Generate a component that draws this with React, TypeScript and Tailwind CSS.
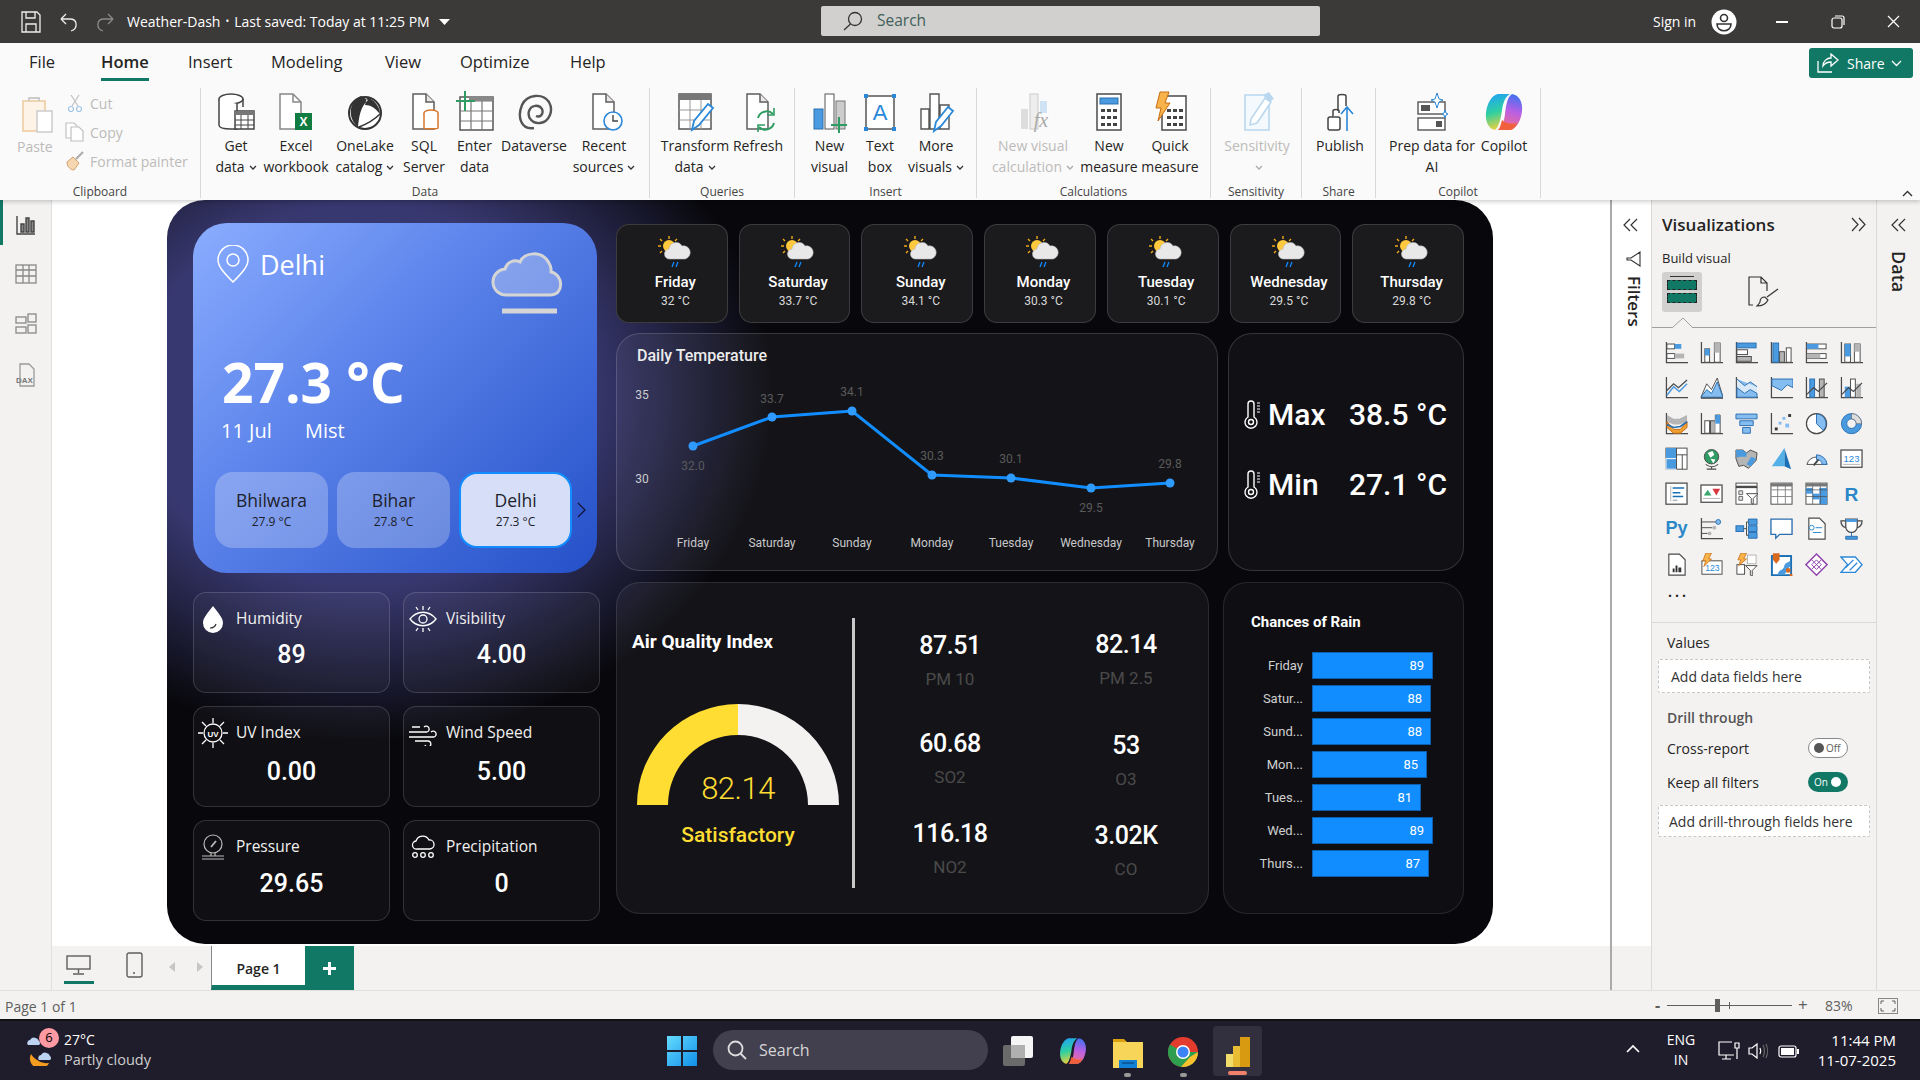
import type { ReactNode } from "react";

const ui = "font-['Open_Sans','Noto_Sans',sans-serif]";
const din = "font-['Roboto',sans-serif]";

const D = "#4a4a4a";
const B = "#4a9ae0";
const L = "#86bdf0";
const G = "#b5b5b5";

const Doc = ({ s = "#605e5c" }: { s?: string }) => (
  <>
    <path d="M9 3h13l8 8v27H9z" fill="#fff" stroke={s} strokeWidth="1.5" />
    <path d="M22 3v8h8" fill="#e8e8e8" stroke={s} strokeWidth="1.5" />
  </>
);

const ribbonIcons: Record<string, ReactNode> = {
  paste: (
    <>
      <rect x="5" y="7" width="22" height="30" fill="#fdf3e6" stroke="#f0d5b0" strokeWidth="2" />
      <path d="M11 7V4h10v3" fill="none" stroke="#ccc" strokeWidth="2" />
      <rect x="19" y="17" width="15" height="21" fill="#fff" stroke="#ccc" strokeWidth="1.5" />
    </>
  ),
  get: (
    <>
      <ellipse cx="15" cy="8" rx="12" ry="5" fill="#fff" stroke="#444" strokeWidth="1.5" />
      <path d="M3 8v26c0 3 5 4 12 4h6V13M27 8v8" fill="#fff" stroke="#444" strokeWidth="1.5" />
      <rect x="19" y="20" width="19" height="18" fill="#fff" stroke="#444" strokeWidth="1.5" />
      <path d="M19 24h19v-4H19z" fill="#777" />
      <path d="M25 24v14M32 24v14M19 29h19M19 34h19" stroke="#444" />
    </>
  ),
  excel: (
    <>
      <path d="M4 3h13l8 8v27H4z" fill="#fff" stroke="#888" strokeWidth="1.5" />
      <path d="M17 3v8h8" fill="none" stroke="#888" strokeWidth="1.5" />
      <rect x="19" y="22" width="17" height="17" fill="#107c41" />
      <text x="27.5" y="35" fontSize="12" fontWeight="700" fill="#fff" textAnchor="middle" fontFamily="Liberation Sans">X</text>
    </>
  ),
  lake: (
    <>
      <circle cx="20" cy="22" r="16" fill="#fff" stroke="#333" strokeWidth="2" />
      <path d="M16 5c-12 5-14 22-3 31 1-9 2-20 10-27zM22 6c7 3 13 9 13 17-5-6-9-9-15-9z" fill="#333" />
      <path d="M14 36c8-3 15-7 21-13" fill="none" stroke="#333" strokeWidth="1.5" />
    </>
  ),
  sql: (
    <>
      <Doc />
      <ellipse cx="27" cy="22" rx="7" ry="3" fill="#fff" stroke="#d9772b" strokeWidth="1.5" />
      <path d="M20 22v15c0 1 14 1 14 0V22" fill="#fff" stroke="#d9772b" strokeWidth="1.5" />
    </>
  ),
  enter: (
    <>
      <rect x="5" y="6" width="33" height="33" fill="#fff" stroke="#555" strokeWidth="1.5" />
      <path d="M5 10h33M16 10v29M27 10v29M5 20h33M5 30h33" stroke="#777" strokeWidth="1.2" />
      <rect x="14" y="5" width="24" height="5" fill="#888" />
      <path d="M10 0v20M1 10h19" stroke="#2f9c63" strokeWidth="2" />
    </>
  ),
  dataverse: (
    <>
      <path d="M20 37C7 39 3 26 8 14 13 3 29 2 35 11c5 9 0 20-9 21-7 1-13-5-11-12 2-6 10-7 13-2 2 5-2 9-6 7" fill="none" stroke="#555" strokeWidth="2.4" />
    </>
  ),
  recent: (
    <>
      <Doc />
      <circle cx="29" cy="30" r="9" fill="#fff" stroke="#2b88d8" strokeWidth="1.6" />
      <path d="M29 24v6h5" fill="none" stroke="#444" strokeWidth="1.4" />
    </>
  ),
  transform: (
    <>
      <rect x="4" y="3" width="32" height="35" fill="#fff" stroke="#555" strokeWidth="1.5" />
      <rect x="4" y="3" width="32" height="6" fill="#777" />
      <path d="M15 9v29M26 9v29M4 19h32M4 29h32" stroke="#999" />
      <path d="M17 39l2-9 14-17 5 4-14 17z" fill="#fff" stroke="#2b88d8" strokeWidth="1.8" />
    </>
  ),
  refresh: (
    <>
      <Doc />
      <path d="M20 27a9 9 0 0 1 15-4M36 32a9 9 0 0 1-15 4" fill="none" stroke="#2f9c63" strokeWidth="2" />
      <path d="M36 17v7h-7M20 41v-7h7" fill="none" stroke="#2f9c63" strokeWidth="1.6" />
    </>
  ),
  newvisual: (
    <>
      <rect x="4" y="18" width="9" height="20" fill={B} stroke="#2b6fb0" />
      <rect x="15" y="3" width="9" height="35" fill="#fff" stroke="#555" />
      <rect x="26" y="10" width="9" height="28" fill="#ccc" stroke="#777" />
      <path d="M29 26v16M21 34h16" stroke="#2f9c63" strokeWidth="2" />
    </>
  ),
  textbox: (
    <>
      <rect x="6" y="5" width="28" height="33" fill="#fff" stroke="#555" strokeWidth="1.5" />
      <path d="M4 3h4v4H4zM32 3h4v4h-4zM4 36h4v4H4zM32 36h4v4h-4z" fill="#2b88d8" />
      <text x="20" y="29" fontSize="22" fill="#2b88d8" textAnchor="middle" fontFamily="Liberation Sans">A</text>
    </>
  ),
  more: (
    <>
      <path d="M5 18h8v20H5zM14 3h9v35h-9zM24 14h9v24h-9z" fill="#fff" stroke="#555" strokeWidth="1.4" />
      <path d="M18 40l2-9 12-15 5 4-12 15z" fill="#fff" stroke="#2b88d8" strokeWidth="1.8" />
    </>
  ),
  calc: (
    <>
      <rect x="8" y="18" width="7" height="20" fill="#ddd" />
      <rect x="17" y="3" width="8" height="35" fill="#eee" stroke="#ccc" />
      <rect x="27" y="10" width="7" height="12" fill="#cfe3f5" />
      <text x="28" y="36" fontSize="20" fontStyle="italic" fill="#aaa" textAnchor="middle" fontFamily="Liberation Serif">fx</text>
    </>
  ),
  measure: (
    <>
      <rect x="8" y="3" width="24" height="36" fill="#fff" stroke="#555" strokeWidth="1.6" />
      <rect x="11" y="7" width="18" height="6" fill={B} stroke="#2b6fb0" />
      <path d="M12 18h4v3h-4zM18 18h4v3h-4zM24 18h4v3h-4zM12 25h4v3h-4zM18 25h4v3h-4zM24 25h4v3h-4zM12 32h4v3h-4zM18 32h4v3h-4zM24 32h4v3h-4z" fill="#444" />
    </>
  ),
  quick: (
    <>
      <rect x="12" y="5" width="24" height="34" fill="#fff" stroke="#555" strokeWidth="1.6" />
      <path d="M17 18h4v3h-4zM23 18h4v3h-4zM29 18h4v3h-4zM17 25h4v3h-4zM23 25h4v3h-4zM29 25h4v3h-4zM17 32h4v3h-4zM23 32h4v3h-4zM29 32h4v3h-4z" fill="#444" />
      <path d="M10 1h9l-4 11h5L8 30l3-13H6z" fill="#f8b44a" stroke="#c66b10" />
    </>
  ),
  sensitivity: (
    <>
      <path d="M8 4h24v35H8z" fill="#f4f9fd" stroke="#b9d8ef" strokeWidth="1.6" />
      <path d="M14 28L28 7l6 4-14 21-7 2z" fill="#fff" stroke="#b9d8ef" strokeWidth="1.6" />
      <path d="M26 4l6-3 5 7-5 3z" fill="#b9d8ef" />
    </>
  ),
  publish: (
    <>
      <rect x="8" y="26" width="12" height="13" rx="2" fill="#fff" stroke="#444" strokeWidth="1.5" />
      <path d="M13 26v-6c0-2 6-2 6 0v2M18 20V5c0-2 8-2 8 0v10" fill="#fff" stroke="#444" strokeWidth="1.5" />
      <path d="M27 40V16M21 23l6-7 6 7" fill="none" stroke="#2b88d8" strokeWidth="1.6" />
    </>
  ),
  prep: (
    <>
      <rect x="6" y="11" width="27" height="12" fill="#fff" stroke="#555" strokeWidth="1.4" />
      <rect x="9" y="14" width="9" height="6" fill="#555" />
      <rect x="6" y="27" width="27" height="12" fill="#fff" stroke="#555" strokeWidth="1.4" />
      <rect x="24" y="30" width="6" height="6" fill="#555" />
      <path d="M25 2l2 6 4 1-4 2-2 6-2-6-4-2 4-1zM33 19l1 3 2 1-2 1-1 3-1-3-2-1 2-1z" fill="#fff" stroke="#2b88d8" />
    </>
  ),
  copilot: <CopilotShape />,
};

function CopilotShape() {
  return (
    <>
      <defs>
        <linearGradient id="cpA" x1="0.3" y1="0" x2="0.5" y2="1">
          <stop offset="0" stopColor="#1fa4f5" />
          <stop offset=".5" stopColor="#2fd0a0" />
          <stop offset="1" stopColor="#f7d038" />
        </linearGradient>
        <linearGradient id="cpB" x1="0.6" y1="0" x2="0.4" y2="1">
          <stop offset="0" stopColor="#3f72f0" />
          <stop offset=".45" stopColor="#b65fe6" />
          <stop offset="1" stopColor="#f7708a" />
        </linearGradient>
      </defs>
      <path d="M14 3h12c-5 3-7 9-8 16-1 8-3 17-7 20-6-1-10-8-9-17C3 12 8 4 14 3z" fill="url(#cpA)" />
      <path d="M28 3c7 1 11 8 10 17-1 10-6 18-12 19H14c5-3 6-9 7-16 1-8 2-17 7-20z" fill="url(#cpB)" />
      <path d="M14 39h13c3-1 5-4 6-7-6 2-12 0-15-3-1 4-2 8-4 10z" fill="#f0603c" />
    </>
  );
}

type RibbonBtn = { w: number; top: string; bottom?: string; icon: string; off?: boolean; caret?: boolean };
type RibbonGroup = { label: string; w: number; btns: RibbonBtn[] };

const groups: RibbonGroup[] = [
  {
    label: "Data",
    w: 449,
    btns: [
      { w: 60, top: "Get", bottom: "data", icon: "get", caret: true },
      { w: 60, top: "Excel", bottom: "workbook", icon: "excel" },
      { w: 78, top: "OneLake", bottom: "catalog", icon: "lake", caret: true },
      { w: 40, top: "SQL", bottom: "Server", icon: "sql" },
      { w: 61, top: "Enter", bottom: "data", icon: "enter" },
      { w: 58, top: "Dataverse", icon: "dataverse" },
      { w: 82, top: "Recent", bottom: "sources", icon: "recent", caret: true },
    ],
  },
  {
    label: "Queries",
    w: 145,
    btns: [
      { w: 80, top: "Transform", bottom: "data", icon: "transform", caret: true },
      { w: 46, top: "Refresh", icon: "refresh" },
    ],
  },
  {
    label: "Insert",
    w: 182,
    btns: [
      { w: 59, top: "New", bottom: "visual", icon: "newvisual" },
      { w: 42, top: "Text", bottom: "box", icon: "textbox" },
      { w: 70, top: "More", bottom: "visuals", icon: "more", caret: true },
    ],
  },
  {
    label: "Calculations",
    w: 234,
    btns: [
      { w: 102, top: "New visual", bottom: "calculation", icon: "calc", off: true, caret: true },
      { w: 50, top: "New", bottom: "measure", icon: "measure" },
      { w: 72, top: "Quick", bottom: "measure", icon: "quick" },
    ],
  },
  { label: "Sensitivity", w: 91, btns: [{ w: 82, top: "Sensitivity", bottom: " ", icon: "sensitivity", off: true, caret: true }] },
  { label: "Share", w: 74, btns: [{ w: 66, top: "Publish", icon: "publish" }] },
  {
    label: "Copilot",
    w: 165,
    btns: [
      { w: 102, top: "Prep data for", bottom: "AI", icon: "prep" },
      { w: 42, top: "Copilot", icon: "copilot" },
    ],
  },
];

const Caret = ({ c = "#333" }: { c?: string }) => (
  <svg width="8" height="6" viewBox="0 0 8 6" className="ml-1 inline-block">
    <path d="M1 1l3 3 3-3" fill="none" stroke={c} strokeWidth="1.3" />
  </svg>
);

const TitleBar = () => (
  <div className={`h-[43px] bg-[#3b3a39] flex items-center text-white shrink-0 ${ui}`}>
    <svg width="20" height="22" viewBox="0 0 20 22" className="ml-[21px]" fill="none" stroke="#eee" strokeWidth="1.3">
      <path d="M1 1h15l3 3v17H1z" />
      <path d="M5 1v6h9V1M5 21v-8h10v8" />
    </svg>
    <svg width="18" height="20" viewBox="0 0 18 20" className="ml-[19px]" fill="none" stroke="#eee" strokeWidth="1.3">
      <path d="M1 7l5 5M1 7l5-5M1 7h9c8 0 8 10 1 12" />
    </svg>
    <svg width="18" height="20" viewBox="0 0 18 20" className="ml-[18px]" fill="none" stroke="#8a8a8a" strokeWidth="1.3">
      <path d="M17 7l-5 5M17 7l-5-5M17 7H8c-8 0-8 10-1 12" />
    </svg>
    <span className="ml-[13px] text-[14px] whitespace-nowrap">Weather-Dash</span>
    <span className="mx-[5px] text-[10px]">•</span>
    <span className="text-[14px] whitespace-nowrap">Last saved: Today at 11:25 PM</span>
    <svg width="11" height="6" viewBox="0 0 11 6" className="ml-[9px]">
      <path d="M0 0h11L5.500 6z" fill="#fff" />
    </svg>
    <div className="absolute left-[821px] top-[6px] w-[499px] h-[30px] bg-[#d2d0ce] rounded-[2px] flex items-center">
      <svg width="20" height="20" viewBox="0 0 20 20" className="ml-[22px]" fill="none" stroke="#333" strokeWidth="1.3">
        <circle cx="12" cy="8" r="6.500" />
        <path d="M7.500 13L1 19" />
      </svg>
      <span className="ml-[14px] text-[15.500px] text-[#3f5f5a]">Search</span>
    </div>
    <span className="absolute left-[1653px] top-[11px] text-[14px]">Sign in</span>
    <svg width="26" height="26" viewBox="0 0 26 26" className="absolute left-[1711px] top-[9px]">
      <circle cx="13" cy="13" r="12.500" fill="#fff" />
      <circle cx="13" cy="9" r="3.500" fill="none" stroke="#333" strokeWidth="1.6" />
      <path d="M6 15h14c0 9-14 9-14 0z" fill="none" stroke="#333" strokeWidth="1.6" />
    </svg>
    <div className="absolute left-[1776px] top-[21px] w-[12px] h-[1.5px] bg-white" />
    <svg width="14" height="14" viewBox="0 0 14 14" className="absolute left-[1831px] top-[15px]" fill="none" stroke="#fff" strokeWidth="1.2">
      <rect x="1" y="3" width="10" height="10" rx="2" />
      <path d="M4 1h7c1 0 2 1 2 2v7" />
    </svg>
    <svg width="13" height="13" viewBox="0 0 13 13" className="absolute left-[1887px] top-[15px]" stroke="#fff" strokeWidth="1.2">
      <path d="M1 1l11 11M12 1L1 12" />
    </svg>
  </div>
);

const Ribbon = () => (
  <div className={`h-[157px] bg-[#fafafa] shrink-0 relative z-10 shadow-[0_2px_4px_rgba(0,0,0,0.18)] ${ui}`}>
    <div className="h-[40px] flex items-center text-[16.500px] text-[#252423] relative">
      <span className="absolute left-[29px] top-[7px]">File</span>
      <span className="absolute left-[101px] top-[7px] font-semibold">Home</span>
      <div className="absolute left-[101px] top-[35px] w-[48px] h-[3px] bg-[#117865]" />
      <span className="absolute left-[188px] top-[7px]">Insert</span>
      <span className="absolute left-[271px] top-[7px]">Modeling</span>
      <span className="absolute left-[385px] top-[7px]">View</span>
      <span className="absolute left-[460px] top-[7px]">Optimize</span>
      <span className="absolute left-[570px] top-[7px]">Help</span>
      <div className="absolute left-[1809px] top-[5px] w-[104px] h-[30px] bg-[#117865] rounded-[3px] flex items-center text-white text-[14px]">
        <svg width="22" height="20" viewBox="0 0 22 20" className="ml-[8px]" fill="none" stroke="#fff" strokeWidth="1.3">
          <path d="M6 13c0-5 4-8 8-8V1l7 6-7 6v-4c-4 0-6 1-8 4zM1 8v11h14" />
        </svg>
        <span className="ml-[8px]">Share</span>
        <svg width="11" height="7" viewBox="0 0 11 7" className="ml-[6px]" fill="none" stroke="#fff" strokeWidth="1.3">
          <path d="M1 1l4.500 4.500L10 1" />
        </svg>
      </div>
    </div>
    <div className="flex h-[110px] mt-[5px]">
      <div className="w-[201px] h-full border-r border-[#d8d8d8] relative shrink-0 text-[14px] text-[#bdbbb9]">
        <svg width="40" height="40" viewBox="0 0 40 40" className="absolute left-[18px] top-[6px]">{ribbonIcons.paste}</svg>
        <span className="absolute left-[17px] top-[48px]">Paste</span>
        <svg width="14" height="18" viewBox="0 0 14 18" className="absolute left-[68px] top-[6px]" fill="none" stroke="#c0c0c0" strokeWidth="1.2">
          <path d="M3 1l7 11M11 1L4 12" />
          <circle cx="3" cy="15" r="2.500" stroke="#9fc5e8" />
          <circle cx="11" cy="15" r="2.500" stroke="#9fc5e8" />
        </svg>
        <span className="absolute left-[90px] top-[5px]">Cut</span>
        <svg width="20" height="20" viewBox="0 0 20 20" className="absolute left-[65px] top-[34px]" fill="#fff" stroke="#c0c0c0" strokeWidth="1.2">
          <path d="M1 1h8l3 3v12H1z" />
          <path d="M6 5h8l4 4v10H6z" />
        </svg>
        <span className="absolute left-[90px] top-[34px]">Copy</span>
        <svg width="20" height="20" viewBox="0 0 20 20" className="absolute left-[65px] top-[63px]">
          <path d="M2 11l6-5 6 6-5 7c-4 0-7-4-7-8z" fill="#f6d7b0" stroke="#d0a070" />
          <path d="M11 8l7-7" stroke="#aaa" strokeWidth="2" />
        </svg>
        <span className="absolute left-[90px] top-[63px] whitespace-nowrap">Format painter</span>
        <span className="absolute left-0 right-0 top-[95px] text-center text-[12px] text-[#444]">Clipboard</span>
      </div>
      {groups.map((g) => (
        <div key={g.label} className="h-full border-r border-[#d8d8d8] relative shrink-0 pl-[5px] flex" style={{ width: g.w }}>
          {g.btns.map((b) => (
            <div key={b.top} className={`flex flex-col items-center shrink-0 pt-[3px] text-[14px] leading-[21px] ${b.off ? "text-[#bdbbb9]" : "text-[#252423]"}`} style={{ width: b.w }}>
              <svg width="40" height="42" viewBox="0 0 40 42" className="shrink-0 mb-[2px]">
                {ribbonIcons[b.icon]}
              </svg>
              <span className="whitespace-nowrap">{b.top}</span>
              <span className="whitespace-nowrap">
                {b.bottom}
                {b.caret && <Caret c={b.off ? "#aaa" : "#333"} />}
              </span>
            </div>
          ))}
          <span className="absolute left-0 right-0 top-[95px] text-center text-[12px] text-[#444]">{g.label}</span>
        </div>
      ))}
      <svg width="11" height="7" viewBox="0 0 11 7" className="absolute left-[1902px] top-[147px]" fill="none" stroke="#333" strokeWidth="1.4">
        <path d="M1 6l4.500-4.500L10 6" />
      </svg>
    </div>
  </div>
);

const LeftNav = () => (
  <div className="w-[52px] shrink-0 bg-[#f3f2f1] border-r border-[#e1dfdd] relative">
    <div className="absolute left-0 top-0 w-[3px] h-[45px] bg-[#117865]" />
    <div className="flex flex-col items-center gap-[28px] pt-[15px]">
      <svg width="20" height="20" viewBox="0 0 20 20" fill="none" stroke="#444" strokeWidth="1.4">
        <path d="M1 1v18h18" />
        <path d="M5 9h3v8H5zM10 3h3v14h-3zM15 6h3v11h-3z" fill="#8a8886" />
      </svg>
      <svg width="22" height="22" viewBox="0 0 22 22" fill="none" stroke="#888" strokeWidth="1.3">
        <rect x="1" y="2" width="20" height="18" />
        <path d="M1 7h20M1 13h20M8 2v18M14 2v18" />
      </svg>
      <svg width="22" height="22" viewBox="0 0 22 22" fill="none" stroke="#888" strokeWidth="1.3">
        <rect x="1" y="4" width="10" height="6" />
        <rect x="1" y="14" width="10" height="6" />
        <rect x="13" y="1" width="8" height="8" />
        <rect x="13" y="12" width="8" height="8" />
      </svg>
      <svg width="22" height="24" viewBox="0 0 22 24">
        <path d="M5 1h9l5 5v17H5z" fill="none" stroke="#999" strokeWidth="1.3" />
        <text x="1" y="20" fontSize="8" fontWeight="700" fill="#777" fontFamily="Liberation Sans">DAX</text>
      </svg>
    </div>
  </div>
);

const WeatherGlyph = () => (
  <svg width="36" height="34" viewBox="0 0 36 34">
    <circle cx="12" cy="11" r="6" fill="#ffc83d" />
    <path d="M12 1v3M3 4l2 2M1 11h3M3 18l2-2M20 4l-2 2" stroke="#f0a818" strokeWidth="1.4" />
    <path d="M13 24a5 5 0 0 1-1-10 7 7 0 0 1 13-3 6.500 6.500 0 0 1 3 13z" fill="#e8e8e8" stroke="#bbb" strokeWidth="0.6" />
    <path d="M17 27l-2 5M21 27l-2 5" stroke="#118dff" strokeWidth="1.3" />
  </svg>
);

const forecast = [
  ["Friday", "32 °C"],
  ["Saturday", "33.7 °C"],
  ["Sunday", "34.1 °C"],
  ["Monday", "30.3 °C"],
  ["Tuesday", "30.1 °C"],
  ["Wednesday", "29.5 °C"],
  ["Thursday", "29.8 °C"],
];

const tempPts = [
  { d: "Friday", x: 76, y: 69, v: "32.0", ly: 89 },
  { d: "Saturday", x: 155, y: 40, v: "33.7", ly: 22 },
  { d: "Sunday", x: 235, y: 34, v: "34.1", ly: 15 },
  { d: "Monday", x: 315, y: 98, v: "30.3", ly: 79 },
  { d: "Tuesday", x: 394, y: 101, v: "30.1", ly: 82 },
  { d: "Wednesday", x: 474, y: 111, v: "29.5", ly: 131 },
  { d: "Thursday", x: 553, y: 106, v: "29.8", ly: 87 },
];

const rain = [
  ["Friday", 89, 121],
  ["Satur...", 88, 119],
  ["Sund...", 88, 119],
  ["Mon...", 85, 115],
  ["Tues...", 81, 109],
  ["Wed...", 89, 121],
  ["Thurs...", 87, 117],
] as const;

const Thermo = () => (
  <svg width="18" height="30" viewBox="0 0 18 28" fill="none" stroke="#fff" strokeWidth="1.4" className="shrink-0">
    <path d="M5 17V4a3 3 0 0 1 6 0v13a6 6 0 1 1-6 0z" />
    <circle cx="8" cy="22" r="2.500" />
    <path d="M14 3h3M14 6h3M14 9h3M14 12h3" strokeWidth="1" />
  </svg>
);

type Stat = { label: string; value: string; icon: ReactNode };

const stroke = { fill: "none", stroke: "#fff", strokeWidth: 1.3 };
const stats: Stat[] = [
  {
    label: "Humidity",
    value: "89",
    icon: (
      <svg width="34" height="30" viewBox="0 0 34 30">
        <path d="M17 2c6 8 10 12 10 17a10 10 0 0 1-20 0c0-5 4-9 10-17z" fill="#fff" />
        <path d="M14 24c3 0 5-1 6-4" fill="none" stroke="#333" strokeWidth="1.2" />
      </svg>
    ),
  },
  {
    label: "Visibility",
    value: "4.00",
    icon: (
      <svg width="30" height="30" viewBox="0 0 30 30" {...stroke}>
        <path d="M2 15c7-9 19-9 26 0-7 9-19 9-26 0z" />
        <circle cx="15" cy="15" r="4" />
        <path d="M15 2v4M8 3l2 3M22 3l-2 3M15 24v4M8 27l2-3M22 27l-2-3" />
      </svg>
    ),
  },
  {
    label: "UV Index",
    value: "0.00",
    icon: (
      <svg width="32" height="32" viewBox="0 0 32 32" {...stroke}>
        <circle cx="16" cy="16" r="9" />
        <path d="M16 1v5M16 26v5M1 16h5M26 16h5M5 5l4 4M27 5l-4 4M5 27l4-4M27 27l-4-4" />
        <text x="16" y="19.500" fontSize="8" fontWeight="700" fill="#fff" stroke="none" textAnchor="middle" fontFamily="Liberation Sans">UV</text>
      </svg>
    ),
  },
  {
    label: "Wind Speed",
    value: "5.00",
    icon: (
      <svg width="30" height="26" viewBox="0 0 30 26" {...stroke}>
        <path d="M1 12h18a3 3 0 1 0-3-5M1 17h25a3 3 0 1 0-3-5M7 21h13a3 3 0 1 1-3 4M4 7h8" />
      </svg>
    ),
  },
  {
    label: "Pressure",
    value: "29.65",
    icon: (
      <svg width="30" height="28" viewBox="0 0 30 28" fill="none" stroke="#bbb" strokeWidth="1.2">
        <circle cx="15" cy="11" r="9" />
        <path d="M13 14l5-6" strokeWidth="1.8" />
        <path d="M4 23h22M4 26h22M13 20v3M17 20v3" />
      </svg>
    ),
  },
  {
    label: "Precipitation",
    value: "0",
    icon: (
      <svg width="26" height="26" viewBox="0 0 26 26" {...stroke}>
        <path d="M7 15a4 4 0 0 1-1-8 7 7 0 0 1 13-1 4.500 4.500 0 0 1 1 9z" />
        <circle cx="5" cy="21" r="2.300" />
        <circle cx="13" cy="21" r="2.300" />
        <circle cx="21" cy="21" r="2.300" />
      </svg>
    ),
  },
];

const Report = () => (
  <div className="w-[1326px] h-[744px] rounded-[38px] pl-[26px] pt-[23px] flex bg-[radial-gradient(ellipse_410px_345px_at_195px_195px,#3a3a72_0%,#383870_55%,#08080c_100%)] bg-[#050506] shrink-0">
    <div className="w-[406px] shrink-0">
      <div className={`w-[404px] h-[350px] rounded-[34px] bg-[linear-gradient(135deg,#8aadff_0%,#5f86ec_38%,#2450c8_100%)] pt-[22px] relative text-white ${ui}`}>
        <div className="flex items-start pl-[24px]">
          <svg width="32" height="38" viewBox="0 0 32 38" fill="none" stroke="#fff" strokeWidth="1.500" className="shrink-0">
            <path d="M16 37C6 27 1 21 1 15a15 15 0 0 1 30 0c0 6-5 12-15 22z" />
            <circle cx="16" cy="15" r="6" />
          </svg>
          <span className="ml-[11px] text-[27px] leading-[40px]">Delhi</span>
          <svg width="76" height="66" viewBox="0 0 76 66" className="ml-auto mr-[30px] mt-[4px] shrink-0">
            <path d="M16 46a13 13 0 0 1-2-26c2-7 9-10 15-7C33 3 51 1 58 14c3 5 2 7 2 9 12 2 14 23-1 23z" fill="#ffffff" fillOpacity="0.28" stroke="#d5d5d5" strokeWidth="3" />
            <path d="M11 62h55" stroke="#d5d5d5" strokeWidth="5" />
          </svg>
        </div>
        <div className="absolute left-[29px] top-[129px] text-[55px] leading-[60px] font-bold whitespace-nowrap">27.3 °C</div>
        <div className="absolute left-[28px] top-[194px] flex text-[20px] leading-[28px]">
          <span className="w-[84px]">11 Jul</span>
          <span>Mist</span>
        </div>
        <div className="absolute left-[22px] top-[249px] flex items-center gap-[9px] text-[#1d1d2b]">
          {[
            ["Bhilwara", "27.9 °C", false],
            ["Bihar", "27.8 °C", false],
            ["Delhi", "27.3 °C", true],
          ].map(([c, t, on]) => (
            <div
              key={c as string}
              className={`h-[76px] w-[113px] rounded-[18px] flex flex-col items-center ${on ? "bg-[#d6dff7] border-2 border-[#118dff] pt-[14px]" : "bg-white/25 pt-[16px]"}`}
            >
              <span className="text-[17.500px] leading-[24px]">{c}</span>
              <span className="text-[12px] leading-[20px]">{t}</span>
            </div>
          ))}
          <svg width="10" height="16" viewBox="0 0 10 16" fill="none" stroke="#14143a" strokeWidth="1.3" className="-ml-[4px]">
            <path d="M1 1l7 7-7 7" />
          </svg>
        </div>
      </div>
      <div className="grid grid-cols-[197px_197px] gap-x-[13px] gap-y-[13px] mt-[19px]">
        {stats.map((s, i) => (
          <div key={s.label} className="h-[101px] rounded-[13px] border border-white/15 bg-white/[0.035]">
            <div className="flex items-center h-[52px] pl-px">
              <div className="w-[36px] flex justify-center">{s.icon}</div>
              <span className={`ml-[5px] text-[15.500px] text-[#f0f0f0] ${ui}`}>{s.label}</span>
            </div>
            <div className={`text-center text-[25px] leading-[32px] font-medium text-white ${din} ${i >= 4 ? "-mt-[5px]" : i >= 2 ? "-mt-[3px]" : "-mt-[6px]"}`}>{s.value}</div>
          </div>
        ))}
      </div>
    </div>
    <div className={`w-[848px] ml-[17px] pt-px shrink-0 text-white ${din}`}>
      <div className="grid grid-cols-7 gap-x-[11px]">
        {forecast.map(([d, t]) => (
          <div key={d} className="h-[99px] rounded-[13px] border border-white/15 bg-[#1b1b1d] flex flex-col items-center pt-[10px] pl-[7px]">
            <WeatherGlyph />
            <span className="text-[15px] leading-[20px] font-medium mt-[3px]">{d}</span>
            <span className="text-[12px] leading-[18px] text-[#d8d8d8]">{t}</span>
          </div>
        ))}
      </div>
      <div className="flex gap-[10px] mt-[10px] h-[238px]">
        <div className="w-[602px] rounded-[24px] border border-white/15 bg-white/[0.05]">
          <div className="h-[43px] pt-[10px] pl-[20px] text-[16px] font-medium text-[#ececec]">Daily Temperature</div>
          <svg width="600" height="193" viewBox="0 0 600 193" className={din}>
            <text x="25" y="22" fontSize="12" fill="#ccc" textAnchor="middle">35</text>
            <text x="25" y="106" fontSize="12" fill="#ccc" textAnchor="middle">30</text>
            <polyline points={tempPts.map((p) => `${p.x},${p.y}`).join(" ")} fill="none" stroke="#118dff" strokeWidth="3" />
            {tempPts.map((p) => (
              <g key={p.d}>
                <circle cx={p.x} cy={p.y} r="4.500" fill="#2f9bff" />
                <text x={p.x} y={p.ly + 4} fontSize="12" fill="#5a5a5a" textAnchor="middle">{p.v}</text>
                <text x={p.x} y="170" fontSize="12" fill="#c8c8c8" textAnchor="middle">{p.d}</text>
              </g>
            ))}
          </svg>
        </div>
        <div className="w-[236px] rounded-[24px] border border-white/15 bg-white/[0.04] flex flex-col pt-[59px] pl-[14px] gap-[28px]">
          {[
            ["Max", "38.5 °C"],
            ["Min", "27.1 °C"],
          ].map(([k, v]) => (
            <div key={k} className="flex items-center h-[42px] text-[30px] font-medium">
              <Thermo />
              <span className="ml-[7px] w-[81px]">{k}</span>
              <span className="whitespace-nowrap">{v}</span>
            </div>
          ))}
        </div>
      </div>
      <div className="flex gap-[14px] mt-[11px] h-[332px]">
        <div className="w-[593px] rounded-[24px] border border-white/10 bg-white/[0.05] flex">
          <div className="w-[235px] shrink-0 pl-[15px] pt-[47px]">
            <div className="h-[24px] text-[19px] leading-[24px] font-bold whitespace-nowrap">Air Quality Index</div>
            <div className="relative mt-[49px] w-[206px] ml-[3px]">
              <svg width="206" height="103" viewBox="0 0 206 103" className="block">
                <path d="M2 102A101 101 0 0 1 103 1V32A70 70 0 0 0 33 102Z" fill="#ffdd33" />
                <path d="M204 102A101 101 0 0 0 103 1V32A70 70 0 0 1 173 102Z" fill="#f3f2f1" />
              </svg>
              <span className="absolute left-0 right-0 bottom-[-3px] text-center text-[31px] leading-[40px] font-light tracking-[-0.5px] text-[#ffdd33]">82.14</span>
            </div>
            <div className="w-[206px] ml-[3px] mt-[15px] text-center text-[21px] leading-[28px] font-medium text-[#ffdd33]">Satisfactory</div>
          </div>
          <div className="w-[3px] h-[270px] mt-[35px] bg-[#c8c8c8] shrink-0" />
          <div className="flex pl-[7px]">
            {[
              { pt: "pt-[47px]", m: ["", "mt-[36px]", "mt-[28px]"], items: [["87.51", "PM 10"], ["60.68", "SO2"], ["116.18", "NO2"]] },
              { pt: "pt-[46px]", m: ["", "mt-[39px]", "mt-[28px]"], items: [["82.14", "PM 2.5"], ["53", "O3"], ["3.02K", "CO"]] },
            ].map((col, ci) => (
              <div key={ci} className={`w-[176px] flex flex-col items-center ${col.pt}`}>
                {col.items.map(([v, l], i) => (
                  <div key={l} className={`flex flex-col items-center h-[62px] ${col.m[i]}`}>
                    <span className="text-[25px] leading-[32px] font-medium tracking-[-0.5px]">{v}</span>
                    <span className="text-[17px] leading-[24px] mt-[5px] text-[#4a4a4a]">{l}</span>
                  </div>
                ))}
              </div>
            ))}
          </div>
        </div>
        <div className="w-[241px] rounded-[24px] border border-white/10 bg-white/[0.03] pt-[29px]">
          <div className="pl-[27px] h-[20px] text-[15px] leading-[20px] font-bold">Chances of Rain</div>
          <div className="flex flex-col gap-[6px] mt-[20px]">
            {rain.map(([d, v, w]) => (
              <div key={d} className="flex items-center h-[27px]">
                <span className="w-[79px] text-right text-[13px] text-[#d0d0d0]">{d}</span>
                <div className="ml-[9px] h-[27px] bg-[#118dff] border border-[#0b5fae] flex items-center justify-end pr-[8px] text-[13px]" style={{ width: w }}>
                  {v}
                </div>
              </div>
            ))}
          </div>
        </div>
      </div>
    </div>
  </div>
);

const axis = <path d="M1.500 1v21.500H24" fill="none" stroke={D} strokeWidth="1.300" />;
const vizIcons: ReactNode[] = [
  <>{axis}<rect x="2" y="3" width="8" height="5" fill="#fff" stroke={D} /><rect x="10" y="3" width="7" height="5" fill={B} /><rect x="2" y="13" width="8" height="5" fill="#fff" stroke={D} /><rect x="10" y="13" width="10" height="5" fill={G} /></>,
  <>{axis}<rect x="5" y="8" width="5" height="14" fill="#fff" stroke={D} /><rect x="5" y="8" width="5" height="7" fill={B} /><rect x="15" y="2" width="6" height="20" fill="#fff" stroke={D} /><rect x="15" y="2" width="6" height="10" fill={G} /></>,
  <>{axis}<rect x="2" y="2" width="20" height="5" fill={B} stroke="#2b6fb0" /><rect x="2" y="9" width="11" height="5" fill="#fff" stroke={D} /><rect x="2" y="16" width="15" height="5" fill={G} stroke={D} /></>,
  <>{axis}<rect x="3" y="2" width="6" height="20" fill={B} stroke="#2b6fb0" /><rect x="10" y="11" width="5" height="11" fill={G} stroke={D} /><rect x="17" y="7" width="5" height="15" fill="#fff" stroke={D} /></>,
  <>{axis}<rect x="2" y="3" width="20" height="5" fill="#fff" stroke={D} /><rect x="2" y="3" width="12" height="5" fill={B} /><rect x="2" y="13" width="20" height="5" fill="#fff" stroke={D} /><rect x="2" y="13" width="14" height="5" fill={G} /></>,
  <>{axis}<rect x="5" y="3" width="6" height="19" fill="#fff" stroke={D} /><rect x="5" y="3" width="6" height="13" fill={B} /><rect x="15" y="3" width="6" height="19" fill="#fff" stroke={D} /><rect x="15" y="3" width="6" height="8" fill={G} /></>,
  <>{axis}<path d="M2 15l7-7 5 4 9-8" fill="none" stroke={D} strokeWidth="1.300" /><path d="M2 20l7-9 6 5 8-8" fill="none" stroke={B} strokeWidth="1.500" /></>,
  <><path d="M1 22L7 8l5 6 6-12 6 20z" fill="#fff" stroke={D} /><path d="M1 22l6-8 5 4 6-12 6 16z" fill={L} stroke="#2b6fb0" /><path d="M1 23h23" stroke={D} strokeWidth="1.300" /></>,
  <>{axis}<path d="M2 3l8 7 6-4 7 5v11H2z" fill="#d9e9f8" /><path d="M2 3l8 7 6-4 7 5M2 12l8 6 6-4 7 4v4H2z" fill={L} stroke="#2b6fb0" /></>,
  <>{axis}<path d="M2 3h22v9l-6-3-6 6-10-5z" fill={L} stroke="#2b6fb0" /></>,
  <>{axis}<rect x="5" y="3" width="5" height="19" fill={B} stroke="#2b6fb0" /><rect x="15" y="3" width="5" height="19" fill={G} stroke={D} /><path d="M2 19l7-7 5 4 9-9" fill="none" stroke={D} strokeWidth="1.300" /></>,
  <>{axis}<rect x="5" y="11" width="6" height="11" fill={B} /><rect x="11" y="3" width="5" height="19" fill="#fff" stroke={D} /><rect x="17" y="8" width="5" height="14" fill={G} /><path d="M2 19l7-7 5 4 9-9" fill="none" stroke={D} strokeWidth="1.300" /></>,
  <>{axis}<path d="M2 3l7 4 6 0 8-4v7l-8 3-6 0-7-3z" fill={G} /><path d="M2 10l7 8h7l7-8v6l-7 6H9l-7-6z" fill="#f0a030" stroke="#c66b10" /><path d="M2 13l7 3 7-1 7-5" fill="none" stroke="#2b6fb0" strokeWidth="1.800" /></>,
  <>{axis}<rect x="5" y="9" width="5" height="13" fill="#fff" stroke={D} /><rect x="11" y="9" width="5" height="13" fill={G} stroke={D} /><path d="M16 8V3h5v19h-5" fill="#fff" stroke={D} /><rect x="16" y="3" width="5" height="9" fill={B} /></>,
  <><path d="M1 2h22v5H1zM5 9h14v5H5zM8 16h8v6H8z" fill={L} stroke="#2b6fb0" /></>,
  <>{axis}<rect x="5" y="16" width="3" height="3" fill="#333" /><rect x="9" y="10" width="3" height="3" fill={L} /><rect x="13" y="5" width="3" height="3" fill={L} /><rect x="16" y="12" width="4" height="4" fill={L} /><rect x="19" y="2" width="3" height="3" fill="#333" /></>,
  <><circle cx="12" cy="12" r="10.500" fill="#fff" stroke={D} strokeWidth="1.300" /><path d="M12 2a10 10 0 0 1 7 17l-7-7z" fill={L} stroke="#2b6fb0" /></>,
  <><circle cx="12" cy="12" r="10.500" fill={B} stroke="#2b6fb0" /><circle cx="12" cy="12" r="5" fill="#f3f2f1" stroke="#2b6fb0" /><path d="M12 1.500A10.500 10.500 0 0 1 22.500 12H17a5 5 0 0 0-5-5z" fill="#ddd" stroke={D} strokeWidth="0.500" /></>,
  <><rect x="1" y="1" width="22" height="22" fill="#fff" stroke={D} /><rect x="1" y="1" width="11" height="11" fill={B} /><rect x="1" y="12" width="11" height="11" fill={B} stroke="#fff" /><path d="M12 1v22M12 8h11M18 8v15" stroke={D} fill="none" /></>,
  <><circle cx="12" cy="10" r="7.500" fill="#2f9c63" stroke={D} /><path d="M8 6l5-2 2 4-4 3zM11 12l5 1-2 4z" fill="#fff" /><path d="M6 18c4 3 9 3 13 0M12 20v3M7 23h10" fill="none" stroke={D} strokeWidth="1.200" /></>,
  <><path d="M1 3h7l4 3 4-3 7 3-1 8-8 8-5-3-5 1-3-8z" fill={G} stroke={D} /><path d="M1 3h7l4 3v4H5l-3 1z" fill={B} /><path d="M12 18l5-8 5 2-5 8z" fill={B} /></>,
  <><path d="M15 1l7 22-7-3z" fill="#1a6fb5" /><path d="M15 1L2 20l13 0z" fill="#55b0e8" /></>,
  <><path d="M2 18a11 11 0 0 1 21 0z" fill="#fff" stroke={D} /><path d="M12 8a11 11 0 0 1 11 10h-5a6 6 0 0 0-6-5z" fill={L} stroke="#2b6fb0" /><path d="M9 19l5-6" stroke={D} strokeWidth="2" /></>,
  <><rect x="1" y="3" width="22" height="18" fill="#fff" stroke={D} strokeWidth="1.300" /><text x="12" y="15" fontSize="10" fill="#2b88d8" textAnchor="middle" fontFamily="Liberation Sans">123</text><path d="M3 18h18" stroke={G} /></>,
  <><rect x="1" y="1" width="22" height="22" fill="#fff" stroke={D} strokeWidth="1.300" /><path d="M6 4v16" stroke={G} /><path d="M8 6h12M8 11h8M8 15h11" stroke="#1a6fb5" strokeWidth="1.600" /><path d="M8 19h5" stroke={G} strokeWidth="1.600" /></>,
  <><rect x="1" y="3" width="22" height="18" fill="#fff" stroke={D} strokeWidth="1.300" /><path d="M4 14l4-6 4 6z" fill="#3aa76d" /><path d="M13 7h8l-4 7z" fill="#d9363e" /><path d="M3 17h18" stroke={G} /></>,
  <><rect x="1" y="1" width="22" height="22" fill="#fff" stroke={D} /><path d="M1 5h22" stroke={D} strokeWidth="2.500" /><path d="M4 9h4v4H4zM4 15h4v4H4z" fill="#ddd" stroke={D} strokeWidth="0.800" /><path d="M12 12h12l-5 5v6l-2-1v-5z" fill="#fff" stroke={D} /></>,
  <><rect x="1" y="1" width="22" height="22" fill="#fff" stroke={D} /><path d="M1 8h22M1 15h22M8 1v22M16 1v22" stroke="#888" /><path d="M1 3h22" stroke="#777" strokeWidth="3" /></>,
  <><rect x="1" y="1" width="22" height="22" fill="#fff" stroke={D} /><rect x="1" y="6" width="7" height="6" fill={B} /><rect x="8" y="12" width="7" height="6" fill={B} /><rect x="15" y="6" width="8" height="17" fill={B} /><path d="M1 8h22M1 15h22M8 1v22M16 1v22" stroke={D} strokeWidth="0.700" /><path d="M1 3h22" stroke="#777" strokeWidth="3" /></>,
  <text x="12" y="20" fontSize="20" fontWeight="700" fill="#2b88c8" textAnchor="middle" fontFamily="Liberation Sans">R</text>,
  <text x="12" y="18" fontSize="19" fontWeight="700" fill="#2b88c8" textAnchor="middle" fontFamily="Liberation Sans">Py</text>,
  <>{axis}<path d="M2 5h15M2 11h11M2 17h6" stroke={D} /><circle cx="19" cy="5" r="2.500" fill={L} stroke="#2b6fb0" /><circle cx="15" cy="11" r="2" fill={G} /><circle cx="10" cy="17" r="2" fill={G} /></>,
  <><rect x="1" y="9" width="8" height="6" fill={B} stroke="#2b6fb0" /><path d="M14 2h9v6h-9zM14 9h9v6h-9zM14 16h9v6h-9z" fill={B} stroke="#2b6fb0" /><path d="M9 12h3M12 5v14M12 5h2M12 19h2" stroke={D} fill="none" /></>,
  <path d="M1 2h22v16H10l-4 4v-4H1z" fill="#fff" stroke="#2b6fb0" strokeWidth="1.400" />,
  <><path d="M4 1h11l6 6v16H4z" fill="#fff" stroke={D} strokeWidth="1.200" /><circle cx="7" cy="11" r="2.500" fill="#fff" stroke="#2b88c8" /><path d="M11 11h7M8 16h9" stroke="#2b88c8" /></>,
  <><path d="M6 2h12v8a6 6 0 0 1-12 0z" fill="#fff" stroke={D} strokeWidth="1.300" /><rect x="6" y="2" width="12" height="3" fill={B} /><path d="M6 4H1c0 4 2 6 5 7M18 4h5c0 4-2 6-5 7" fill="none" stroke={D} strokeWidth="1.300" /><path d="M12 16v4M6 23h12v-3H6z" fill={B} stroke="#2b6fb0" /></>,
  <><path d="M4 1h11l6 6v16H4z" fill="#fff" stroke={D} strokeWidth="1.200" /><path d="M8 20v-4h2v4zM11 20v-7h2v7zM14 20v-5h3v5z" fill="#333" /></>,
  <><rect x="2" y="8" width="21" height="14" fill="#fff" stroke={D} /><text x="13" y="19" fontSize="9" fill="#2b88d8" textAnchor="middle" fontFamily="Liberation Sans">123</text><path d="M6 0h6L9 6h3L4 14l2-6H3z" fill="#f8b44a" stroke="#c66b10" strokeWidth="0.800" /></>,
  <><rect x="2" y="12" width="8" height="10" fill="#fff" stroke={D} /><rect x="13" y="2" width="9" height="9" fill="#fff" stroke={G} /><path d="M11 13h12l-5 5v6l-2-1v-5z" fill="#fff" stroke={D} /><path d="M6 0h6L9 6h3L4 13l2-6H3z" fill="#f8b44a" stroke="#c66b10" strokeWidth="0.800" /></>,
  <><rect x="2" y="3" width="20" height="20" fill="#fff" stroke="#1a6fb5" strokeWidth="2" /><path d="M8 22c2-6 6-3 7-9 1-3 4-3 6-5v6c-3 2-3 6-6 8z" fill={B} /><circle cx="19" cy="18" r="2.500" fill="#d9691e" /><circle cx="22" cy="23" r="1.500" fill="#d9691e" /><path d="M3 0h7v7l-3.500 4L3 7z" fill="#d9691e" /></>,
  <><path d="M12 1l11 11-11 11L1 12z" fill="#fff" stroke="#8e44ad" strokeWidth="1.500" /><path d="M7 12l5-5 5 5-5 5zM7 7l10 10M17 7L7 17" fill="none" stroke="#8e44ad" /></>,
  <><path d="M1 4h15l7 8-7 8H1l7-8z" fill="#fff" stroke="#2b88d8" strokeWidth="1.400" /><path d="M6 15l8-8M10 18l8-8" stroke="#2b88d8" strokeWidth="1.400" /></>,
];

const Field = ({ children, h, pl }: { children: ReactNode; h: string; pl: string }) => (
  <div className={`mx-[6px] bg-white border border-dashed border-[#c8c6c4] rounded-[2px] flex items-center text-[#333] text-[14px] whitespace-nowrap ${h} ${pl}`}>{children}</div>
);

const RightPanes = () => (
  <div className={`flex shrink-0 ${ui}`}>
    <div className="w-[41px] bg-white border-l-[2px] border-[#aaa] relative text-[#252423]">
      <svg width="15" height="14" viewBox="0 0 15 14" className="absolute left-[11px] top-[18px]" fill="none" stroke="#333" strokeWidth="1.200">
        <path d="M7 1L1 7l6 6M14 1L8 7l6 6" />
      </svg>
      <svg width="15" height="16" viewBox="0 0 15 16" className="absolute left-[14px] top-[51px]" fill="none" stroke="#333" strokeWidth="1.100">
        <path d="M1 7h4l9-6v14l-9-6H1z" />
      </svg>
      <span className="absolute left-[9px] top-[76px] text-[17px] font-semibold [writing-mode:vertical-rl]">Filters</span>
      <div className="absolute left-0 right-0 top-[746px] bottom-0 bg-[#f3f2f1]" />
    </div>
    <div className="w-[226px] h-[790px] bg-[#f3f2f1] border-x border-[#dcdad8] text-[#252423] relative">
      <div className="absolute left-[10px] top-[12px] text-[17px] font-semibold">Visualizations</div>
      <svg width="16" height="15" viewBox="0 0 16 15" className="absolute left-[199px] top-[17px]" fill="none" stroke="#333" strokeWidth="1.200">
        <path d="M1 1l6 6.500L1 14M8 1l6 6.500L8 14" />
      </svg>
      <div className="absolute left-[10px] top-[49px] text-[13px] font-medium">Build visual</div>
      <div className="absolute left-[10px] top-[72px] w-[40px] h-[40px] bg-[#d2d0ce] rounded-[3px] flex flex-col gap-[3px] items-center pt-[4px]">
        <div className="w-[24px] h-[1px] bg-[#333]" />
        <div className="w-[30px] h-[10px] bg-[#117865] border border-dashed border-[#222]" />
        <div className="w-[30px] h-[10px] bg-[#117865] border border-dashed border-[#222]" />
      </div>
      <svg width="32" height="32" viewBox="0 0 32 32" className="absolute left-[96px] top-[76px]" fill="none" stroke="#333" strokeWidth="1.200">
        <path d="M5 29H1V1h12l6 6v8M13 1v6h6" />
        <path d="M9 30c6 0 9-2 11-6l-3-3c-3 0-5 2-5 5-1 2-2 3-3 4zM19 21l11-8" />
      </svg>
      <div className="absolute left-0 right-0 top-[127px] h-px bg-[#a19f9d]" />
      <svg width="22" height="11" viewBox="0 0 22 11" className="absolute left-[20px] top-[117px]">
        <path d="M0 11L11 1l10 10" fill="#f3f2f1" stroke="#a19f9d" />
      </svg>
      <div className="absolute left-[13px] top-[141px] grid grid-cols-6 gap-x-[12px] gap-y-[12px]">
        {vizIcons.map((ic, i) => (
          <svg key={i} width="23" height="23.300" viewBox="0 0 24 24">{ic}</svg>
        ))}
      </div>
      <div className="absolute left-[16px] top-[381px] text-[14px] font-bold tracking-[3px]">...</div>
      <div className="absolute left-0 right-0 top-[422px] h-px bg-[#dcdad8]" />
      <div className="absolute left-0 right-0 top-[432px]">
        <div className="pl-[15px] h-[27px] text-[14px] leading-[22px]">Values</div>
        <Field h="h-[34px]" pl="pl-[12px]">Add data fields here</Field>
        <div className="pl-[15px] mt-[13px] h-[24px] text-[14px] font-semibold text-[#555] leading-[24px]">Drill through</div>
        <div className="flex items-center pl-[15px] h-[34px] text-[14px] mt-[1px]">
          <span className="w-[141px]">Cross-report</span>
          <div className="w-[40px] h-[20px] rounded-full border border-[#888] bg-white flex items-center pl-[5px] text-[10px] text-[#605e5c]">
            <div className="w-[10px] h-[10px] rounded-full bg-[#555] mr-[2px]" />
            Off
          </div>
        </div>
        <div className="flex items-center pl-[15px] h-[34px] text-[14px]">
          <span className="w-[141px]">Keep all filters</span>
          <div className="w-[40px] h-[20px] rounded-full bg-[#117865] flex items-center pl-[6px] text-[10px] text-white">
            On
            <div className="w-[10px] h-[10px] rounded-full bg-white ml-[3px]" />
          </div>
        </div>
        <div className="mt-[6px]">
          <Field h="h-[32px]" pl="pl-[10px]">Add drill-through fields here</Field>
        </div>
      </div>
    </div>
    <div className="w-[43px] bg-[#f3f2f1] relative text-[#252423]">
      <svg width="15" height="14" viewBox="0 0 15 14" className="absolute left-[14px] top-[18px]" fill="none" stroke="#333" strokeWidth="1.200">
        <path d="M7 1L1 7l6 6M14 1L8 7l6 6" />
      </svg>
      <span className="absolute left-[8px] top-[51px] text-[18px] font-semibold [writing-mode:vertical-rl]">Data</span>
    </div>
  </div>
);

const PageTabs = () => (
  <div className={`h-[44px] bg-[#f3f2f1] flex items-start shrink-0 ${ui}`}>
    <div className="w-[159px] h-full relative shrink-0">
      <svg width="26" height="20" viewBox="0 0 26 20" className="absolute left-[14px] top-[9px]" fill="none" stroke="#605e5c" strokeWidth="1.400">
        <rect x="1" y="1" width="23" height="13" />
        <path d="M12.500 14v4M7 19h11" />
      </svg>
      <div className="absolute left-[12px] top-[35px] w-[30px] h-[3px] bg-[#117865]" />
      <svg width="17" height="26" viewBox="0 0 17 26" className="absolute left-[74px] top-[6px]" fill="none" stroke="#605e5c" strokeWidth="1.400">
        <rect x="1" y="1" width="15" height="24" rx="2" />
        <path d="M7 21h2" />
      </svg>
      <svg width="8" height="12" viewBox="0 0 8 12" className="absolute left-[116px] top-[15px]">
        <path d="M7 1L1 6l6 5z" fill="#c8c6c4" />
      </svg>
      <svg width="8" height="12" viewBox="0 0 8 12" className="absolute left-[144px] top-[15px]">
        <path d="M1 1l6 5-6 5z" fill="#c8c6c4" />
      </svg>
    </div>
    <div className="w-[94px] h-[44px] bg-white border-l border-[#888] border-b-[5px] border-b-[#117865] flex items-center justify-center pt-[6px] text-[14px] font-semibold text-[#252423]">Page 1</div>
    <div className="w-[49px] h-[44px] bg-[#117865] flex items-center justify-center">
      <svg width="15" height="15" viewBox="0 0 15 15" stroke="#fff" strokeWidth="3">
        <path d="M7.500 1v13M1 7.500h13" />
      </svg>
    </div>
  </div>
);

const StatusBar = () => (
  <div className={`h-[29px] bg-[#f3f2f1] border-t border-[#e1dfdd] shrink-0 relative text-[14px] text-[#605e5c] ${ui}`}>
    <span className="absolute left-[5px] top-[5px]">Page 1 of 1</span>
    <span className="absolute left-[1655px] top-[2px] text-[16px] font-bold">-</span>
    <div className="absolute left-[1667px] top-[14px] w-[125px] h-px bg-[#605e5c]" />
    <div className="absolute left-[1729px] top-[11px] w-px h-[7px] bg-[#605e5c]" />
    <div className="absolute left-[1715px] top-[8px] w-[5px] h-[13px] bg-[#605e5c]" />
    <span className="absolute left-[1798px] top-[1px] text-[17px]">+</span>
    <span className="absolute left-[1825px] top-[4px]">83%</span>
    <svg width="20" height="16" viewBox="0 0 20 16" className="absolute left-[1878px] top-[7px]" fill="none">
      <rect x="0.500" y="0.500" width="19" height="15" stroke="#888" />
      <path d="M3 6V3h3M14 3h3v3M17 10v3h-3M6 13H3v-3" stroke="#605e5c" />
    </svg>
  </div>
);

const Taskbar = () => (
  <div className={`h-[61px] bg-[#1f1d2c] border-t-2 border-[#111] shrink-0 relative text-white ${ui}`}>
    <svg width="32" height="34" viewBox="0 0 32 34" className="absolute left-[25px] top-[11px]">
      <path d="M6 22a10 10 0 0 0 18 9c-7 1-14-3-18-9z" fill="#f39c1f" />
      <path d="M3 13a3 3 0 0 1 2-5 5 5 0 0 1 9 1 2.500 2.500 0 0 1 0 4z" fill="#bcd3f2" />
      <path d="M14 28a3 3 0 0 1 2-5 5 5 0 0 1 9 1 2.500 2.500 0 0 1 0 4z" fill="#bcd3f2" />
    </svg>
    <div className="absolute left-[39px] top-[7px] w-[20px] h-[20px] rounded-full bg-[#ff9aa2] text-black text-[13px] flex items-center justify-center">6</div>
    <span className="absolute left-[64px] top-[8px] text-[14px]">27°C</span>
    <span className="absolute left-[64px] top-[28px] text-[14.500px] text-[#cfcfcf]">Partly cloudy</span>
    <svg width="30" height="30" viewBox="0 0 30 30" className="absolute left-[667px] top-[15px]">
      <defs>
        <linearGradient id="win" x1="0" y1="0" x2="1" y2="1">
          <stop offset="0" stopColor="#66dcff" />
          <stop offset="1" stopColor="#0f8ee8" />
        </linearGradient>
      </defs>
      <path d="M0 0h14v14H0zM16 0h14v14H16zM0 16h14v14H0zM16 16h14v14H16z" fill="url(#win)" />
    </svg>
    <div className="absolute left-[713px] top-[9px] w-[275px] h-[40px] rounded-full bg-[#42404f] flex items-center">
      <svg width="20" height="20" viewBox="0 0 20 20" className="ml-[14px]" fill="none" stroke="#ddd" strokeWidth="1.800">
        <circle cx="8.500" cy="8.500" r="7" />
        <path d="M13.500 13.500L19 19" />
      </svg>
      <span className="ml-[12px] text-[16px] text-[#d5d5d5]">Search</span>
    </div>
    <svg width="30" height="30" viewBox="0 0 30 30" className="absolute left-[1003px] top-[15px]">
      <rect x="0" y="9" width="22" height="21" rx="2" fill="#6a6a6a" />
      <rect x="8" y="0" width="22" height="22" rx="2" fill="#f5f5f5" />
      <rect x="8" y="9" width="14" height="13" fill="#b0b0b0" />
    </svg>
    <svg width="30" height="30" viewBox="0 0 40 42" className="absolute left-[1058px] top-[15px]"><CopilotShape /></svg>
    <svg width="30" height="32" viewBox="0 0 30 32" className="absolute left-[1113px] top-[15px]">
      <path d="M0 3h11l3 3h16v5H0z" fill="#d9a010" />
      <rect x="0" y="6" width="30" height="26" fill="#f7d558" />
      <path d="M6 24h18v8H6z" fill="#1181d8" />
      <path d="M9 27h12" stroke="#0b4f8a" strokeWidth="1.500" />
    </svg>
    <svg width="30" height="30" viewBox="0 0 30 30" className="absolute left-[1168px] top-[16px]">
      <circle cx="15" cy="15" r="15" fill="#e33b2e" />
      <path d="M15 15L2 22.500A15 15 0 0 1 2 7.500L8 11z" fill="#2e9e4f" />
      <path d="M2 22.500A15 15 0 0 0 15 30 15 15 0 0 0 28 22.500 15 15 0 0 0 30 15H15z" fill="#2e9e4f" />
      <path d="M30 15a15 15 0 0 1-17 14.800L22 20z" fill="#fbc02d" />
      <circle cx="15" cy="15" r="7" fill="#fff" />
      <circle cx="15" cy="15" r="5.500" fill="#3b82f6" />
    </svg>
    <div className="absolute left-[1213px] top-[5px] w-[49px] h-[50px] rounded-[4px] bg-[#322f3e] flex justify-center items-start pt-[11px]">
      <svg width="24" height="30" viewBox="0 0 24 30">
        <rect x="0" y="17" width="11" height="13" fill="#f2dc6a" />
        <rect x="7" y="9" width="11" height="21" fill="#e8bd34" />
        <rect x="14" y="0" width="10" height="30" fill="#d89a10" />
      </svg>
      <div className="absolute left-[15px] bottom-[1px] w-[19px] h-[4px] rounded-full bg-[#f0806a]" />
    </div>
    <div className="absolute left-[1124px] top-[52px] w-[7px] h-[4px] rounded-full bg-[#999]" />
    <div className="absolute left-[1180px] top-[52px] w-[7px] h-[4px] rounded-full bg-[#999]" />
    <svg width="14" height="9" viewBox="0 0 14 9" className="absolute left-[1626px] top-[23px]" fill="none" stroke="#fff" strokeWidth="1.600">
      <path d="M1 8l6-6 6 6" />
    </svg>
    <div className="absolute left-[1667px] top-[9px] w-[28px] text-center text-[14px] leading-[20px] whitespace-nowrap flex flex-col items-center">
      <span>ENG</span>
      <span>IN</span>
    </div>
    <svg width="22" height="20" viewBox="0 0 22 20" className="absolute left-[1718px] top-[20px]" fill="none" stroke="#fff" strokeWidth="1.200">
      <path d="M14 1H1v13h15M8 14v4M4 18h9M17 2h4v5h-4zM19 7v11" />
    </svg>
    <svg width="22" height="16" viewBox="0 0 22 16" className="absolute left-[1748px] top-[22px]" fill="none" stroke="#fff" strokeWidth="1.200">
      <path d="M1 5h3l5-4v14l-5-4H1z" />
      <path d="M12 5c1 2 1 4 0 6" />
      <path d="M15 2c2 4 2 8 0 12M18 1c2 4 2 10 0 14" stroke="#666" />
    </svg>
    <svg width="22" height="16" viewBox="0 0 22 16" className="absolute left-[1778px] top-[22px]">
      <rect x="1" y="3" width="17" height="11" rx="2" fill="none" stroke="#fff" strokeWidth="1.200" />
      <path d="M3 5h13v7H3z" fill="#fff" />
      <rect x="19" y="6" width="2" height="5" fill="#fff" />
    </svg>
    <div className="absolute right-[24px] top-[9px] text-right text-[15px] leading-[20px]">
      <div>11:44 PM</div>
      <div>11-07-2025</div>
    </div>
  </div>
);

export default function App() {
  return (
    <div className="w-[1920px] h-[1080px] overflow-hidden flex flex-col relative bg-white">
      <TitleBar />
      <Ribbon />
      <div className="flex h-[790px] shrink-0">
        <LeftNav />
        <div className="flex-1 flex flex-col min-w-0">
          <div className="h-[746px] bg-white pl-[115px] shrink-0">
            <Report />
          </div>
          <PageTabs />
        </div>
        <RightPanes />
      </div>
      <StatusBar />
      <Taskbar />
    </div>
  );
}
